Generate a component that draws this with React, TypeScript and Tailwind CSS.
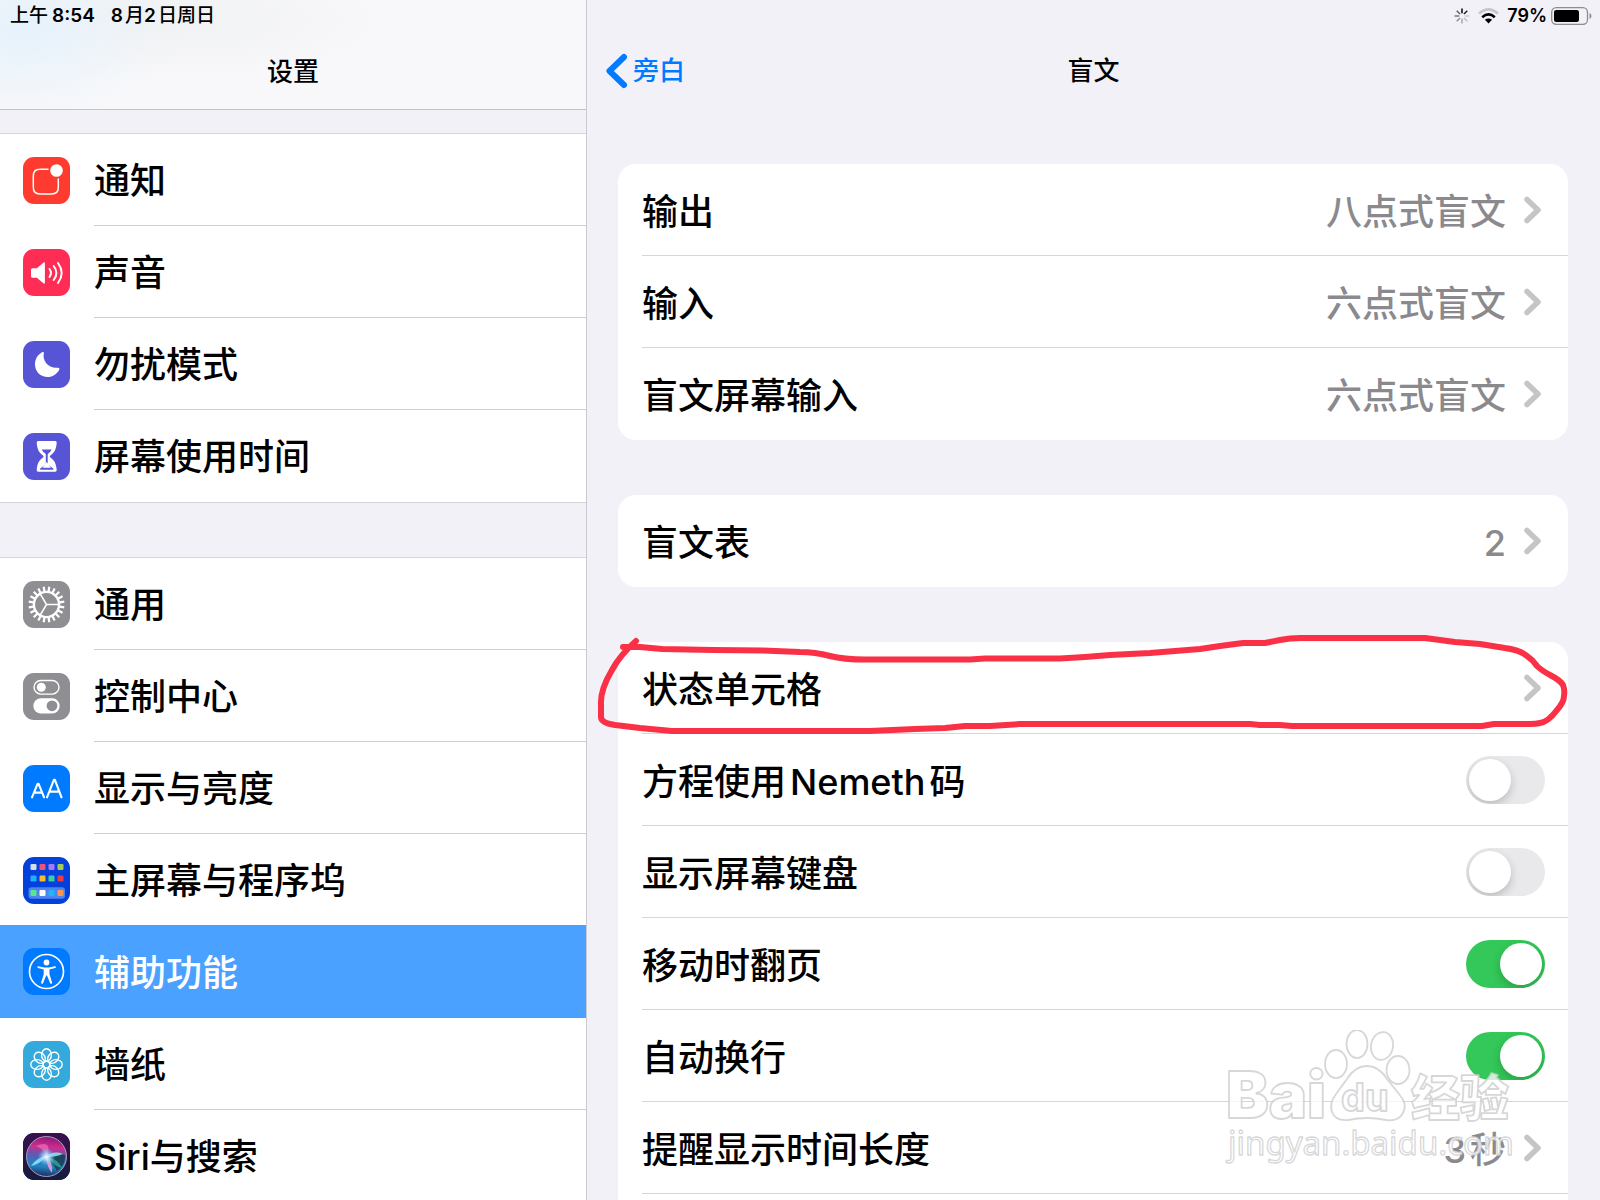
import { useState, type ReactNode } from 'react';

type NavItem = {
  label: ReactNode;
  tile: string;
  icon: ReactNode;
  active?: boolean;
};

const GEAR_TEETH = Array.from({ length: 20 }, (_, i) => i * 18);
const PETALS = Array.from({ length: 8 }, (_, i) => i * 45);

const HOME_APPS = [
  ['#d9dce6', '#f0527a', '#a878f8', '#a6cc58'],
  ['#22b0f8', '#f8bc2c', '#36d0a4', '#ee3c40'],
  ['#5ce68c', '#ffffff', '#1fb6fa', '#f89850'],
];

const BellIcon = () => (
  <>
    <path
      d="M25 12.200H17q-6.700 0-6.700 6.700v11.400q0 6.700 6.700 6.700h11.600q6.700 0 6.700-6.700V22"
      fill="none"
      stroke="#fff"
      strokeWidth="1.500"
      strokeLinecap="round"
    />
    <circle cx="33.500" cy="13.500" r="6.300" fill="#fff" />
  </>
);

const SoundIcon = () => (
  <>
    <path
      d="M9.500 19.200h4.300l6.300-5.300q1.800-1.400 1.800.8v18.600q0 2.200-1.800.8l-6.300-5.300H9.500q-1.500 0-1.500-1.500v-6.600q0-1.500 1.500-1.500z"
      fill="#fff"
    />
    <path
      d="M26.500 20q3 4 0 8M30.700 17q5.400 7 0 14M35 14q7.400 10 0 20"
      fill="none"
      stroke="#fff"
      strokeWidth="2"
      strokeLinecap="round"
    />
  </>
);

const MoonIcon = () => (
  <path
    d="M19.200 11.300c.9-.6 1.900-.2 1.600.9-1.500 7.500 4.200 15.200 13.700 14.500 1.700-.2 2.400.7 1.700 2-2.500 4.600-6.500 7.300-11.500 7.300-7.200 0-12.700-5.700-12.700-12.600 0-5 2.500-9.600 7.200-12.100z"
    fill="#fff"
  />
);

const HourglassIcon = () => (
  <>
    <path
      d="M15.200 8h17q1.600 0 1.500 1.700c-.4 5.900-1.900 9.700-6.300 12.700q-1.300 1 0 2c4.500 3 5.900 6.900 6.300 12.700q.1 1.700-1.500 1.700h-17q-1.600 0-1.500-1.700c.4-5.800 1.800-9.700 6.300-12.700q1.300-1 0-2c-4.400-3-5.900-6.800-6.300-12.700Q13.600 8 15.200 8z"
      fill="#fff"
    />
    <path
      d="M18.700 16.400h10q-1.300 2.600-3.200 3.900-.8.600-.8 1.600v8.600q0 1 .9 1.500l4.700 3.400q.8 1.300-.7 1.300H17.900q-1.500 0-.7-1.300l4.700-3.400q.9-.5.9-1.500v-8.600q0-1-.8-1.600-2.100-1.300-3.300-3.900z"
      fill="#5854d6"
    />
    <path d="M23.700 29l-4.200 5.700h8.500z" fill="#fff" />
  </>
);

const GearIcon = () => (
  <g fill="none" stroke="#fff">
    <circle cx="23.500" cy="23.500" r="12.600" strokeWidth="2.400" />
    <g strokeWidth="2.200">
      {GEAR_TEETH.map((deg) => (
        <path key={deg} d="M23.500 5.500v4.800" transform={`rotate(${deg + 9} 23.500 23.500)`} />
      ))}
    </g>
    <path d="M23.500 23.500h12M23.500 23.500l-6.300-10.700M23.500 23.500l-6.300 10.700" strokeWidth="1.600" />
  </g>
);

const SwitchesIcon = () => (
  <>
    <rect x="11" y="7.500" width="25" height="13.600" rx="6.800" fill="none" stroke="#fff" strokeWidth="1.400" />
    <circle cx="18.300" cy="14.300" r="4.500" fill="#fff" />
    <rect x="10.300" y="25.200" width="26.400" height="15.200" rx="7.600" fill="#fff" />
    <circle cx="29" cy="32.800" r="5.400" fill="#8e8e93" />
  </>
);

const TextSizeIcon = () => (
  <g fill="none" stroke="#fff" strokeLinecap="round" strokeLinejoin="round">
    <path d="M9 32.300l5.700-13.600h.8l5.600 13.600M11 27.600h8.200" strokeWidth="2.100" />
    <path d="M24 32.300l7-17.600h.8l6.700 17.600M26.500 26.600h9.600" strokeWidth="2.100" />
  </g>
);

const HomeScreenIcon = () => (
  <>
    <rect x="5.500" y="30.300" width="36.500" height="11.400" rx="3" fill="#4f83ee" />
    {HOME_APPS.map((row, r) =>
      row.map((color, c) => (
        <rect key={color} x={7.5 + c * 9} y={[7, 18.5, 33][r]} width="6" height="6" rx="1.200" fill={color} />
      ))
    )}
  </>
);

const AccessibilityIcon = () => (
  <>
    <circle cx="23.500" cy="23.500" r="17" fill="none" stroke="#fff" strokeWidth="1.700" />
    <circle cx="23.500" cy="14.500" r="2.900" fill="#fff" />
    <path
      d="M15.300 18.200l6 1.300h4.600l6-1.300q1 0 1.100.8 0 .7-.8.900l-5.700 1.500v4.900l2.600 8.300q.1.900-.7 1.200-.8.200-1.200-.6l-3.200-7.700h-.8l-3.200 7.700q-.4.800-1.200.6-.8-.3-.7-1.200l2.600-8.300v-4.900L15 19.900q-.8-.2-.8-.9.100-.8 1.100-.8z"
      fill="#fff"
    />
  </>
);

const FlowerIcon = () => (
  <g fill="none" stroke="#fff" strokeWidth="1.400">
    {PETALS.map((deg) => (
      <ellipse key={deg} cx="23.500" cy="14" rx="4.900" ry="6.200" transform={`rotate(${deg} 23.500 23.500)`} />
    ))}
    <circle cx="23.500" cy="23.500" r="3.300" />
  </g>
);

const SiriIcon = () => (
  <>
    <defs>
      <linearGradient id="siri-tile" x1="0" y1="0" x2="0" y2="1">
        <stop offset="0" stopColor="#3a1050" />
        <stop offset="1" stopColor="#151c3e" />
      </linearGradient>
      <linearGradient id="siri-orb" x1="0.500" y1="0" x2="0.400" y2="1">
        <stop offset="0" stopColor="#8a1a7c" />
        <stop offset="0.250" stopColor="#d02a8c" />
        <stop offset="0.480" stopColor="#5a5cb4" />
        <stop offset="0.750" stopColor="#2384bc" />
        <stop offset="1" stopColor="#1d2a60" />
      </linearGradient>
      <radialGradient id="siri-glow">
        <stop offset="0" stopColor="#fff" />
        <stop offset="0.350" stopColor="#bfe9ff" stopOpacity="0.800" />
        <stop offset="1" stopColor="#5ac8fa" stopOpacity="0" />
      </radialGradient>
    </defs>
    <rect width="47" height="47" rx="11" fill="url(#siri-tile)" />
    <circle cx="23.500" cy="23.500" r="20" fill="url(#siri-orb)" />
    <path d="M25 24q10-6 17-2 1 10-8 16-5-9-9-14z" fill="#123f52" opacity="0.850" />
    <path d="M24 24Q30 6 13 13q8 3 11 11z" fill="#f58cc4" opacity="0.500" />
    <path d="M24 24Q30 17 40 21q-7 3-16 3z" fill="#9ff5e4" opacity="0.800" />
    <path d="M24 23Q14 24 8 33q9-2 16-10z" fill="#7fe6ff" opacity="0.900" />
    <path d="M23 24q7 4 6 16-5-6-6-16z" fill="#f59ad8" opacity="0.900" />
    <path d="M24 24q11 2 15 11-9-2-15-11z" fill="#35c9a5" opacity="0.600" />
    <circle cx="23.500" cy="24" r="9" fill="url(#siri-glow)" />
    <circle cx="23.500" cy="23.500" r="20" fill="none" stroke="#a7a1b8" strokeWidth="1" />
  </>
);

const NAV_GROUPS: NavItem[][] = [
  [
    { label: '通知', tile: 'bg-[#ff3b30]', icon: <BellIcon /> },
    { label: '声音', tile: 'bg-[#ff2d55]', icon: <SoundIcon /> },
    { label: '勿扰模式', tile: 'bg-[#5854d6]', icon: <MoonIcon /> },
    { label: '屏幕使用时间', tile: 'bg-[#5854d6]', icon: <HourglassIcon /> },
  ],
  [
    { label: '通用', tile: 'bg-[#8e8e93]', icon: <GearIcon /> },
    { label: '控制中心', tile: 'bg-[#8e8e93]', icon: <SwitchesIcon /> },
    { label: '显示与亮度', tile: 'bg-[#007aff]', icon: <TextSizeIcon /> },
    { label: '主屏幕与程序坞', tile: 'bg-[#0340dc]', icon: <HomeScreenIcon /> },
    { label: '辅助功能', tile: 'bg-[#007aff]', icon: <AccessibilityIcon />, active: true },
    { label: '墙纸', tile: 'bg-[#34aadc]', icon: <FlowerIcon /> },
    { label: 'Siri与搜索', tile: 'bg-[#151c3e]', icon: <SiriIcon /> },
  ],
];

function NavRow({ item }: { item: NavItem }) {
  return (
    <li className="group/nav">
      <a
        href="#"
        aria-current={item.active ? 'page' : undefined}
        className={`flex items-center gap-6 pl-[23px] ${
          item.active ? 'relative -mt-px h-[93px] bg-[#4ba1ff] text-white' : 'h-[92px] bg-white text-black'
        }`}
      >
        <svg viewBox="0 0 47 47" className={`size-[47px] shrink-0 rounded-[11px] ${item.tile}`} aria-hidden="true">
          {item.icon}
        </svg>
        <span
          className={`flex h-full flex-1 items-center border-b pt-[3px] group-last/nav:border-transparent ${
            item.active ? 'border-transparent' : 'border-[#cfcfd2]'
          }`}
        >
          {item.label}
        </span>
      </a>
    </li>
  );
}

function Sidebar() {
  return (
    <aside className="flex w-[587px] shrink-0 flex-col border-r border-[#cbcad0]">
      <header className="h-[110px] shrink-0 border-b border-[#c2c2c7] bg-[#f8f8fa] bg-[radial-gradient(ellipse_150px_90px_at_20px_30px,#e6f2fc,transparent),radial-gradient(ellipse_240px_60px_at_150px_20px,#f0f1f2,transparent)]">
        <div className="flex h-8 items-center gap-4 pl-[10px] text-[19px] leading-8">
          <span>上午<b className="ml-1 font-semibold">8:54</b></span>
          <span>
            <b className="mr-0.5 font-semibold">8</b>月<b className="mr-0.5 font-semibold">2</b>日周日
          </span>
        </div>
        <h1 className="pt-[22px] text-center text-[26px] leading-9 font-medium">设置</h1>
      </header>
      <nav className="flex flex-1 flex-col gap-14 overflow-y-auto pt-6 [scrollbar-width:none]">
        {NAV_GROUPS.map((group, i) => (
          <ul key={i} className="shadow-[0_0_0_1px_#d6d6da]">
            {group.map((item, j) => (
              <NavRow key={j} item={item} />
            ))}
          </ul>
        ))}
      </nav>
    </aside>
  );
}

function StatusIcons() {
  return (
    <div className="flex h-8 items-center justify-end pr-2 text-lg leading-8 font-semibold">
      <svg viewBox="0 0 16 16" className="mr-2 size-4" aria-hidden="true" stroke="#000" strokeWidth="1.500">
        {[1, 0.85, 0.15, 0.2, 0.3, 0.4, 0.5, 0.6].map((opacity, i) => (
          <path key={i} d="M8 .5v4.800" opacity={opacity} transform={`rotate(${i * 45} 8 8)`} />
        ))}
      </svg>
      <svg viewBox="0 0 21 16" className="mr-2 h-4 w-[21px]" aria-hidden="true" fill="none" strokeWidth="2.600">
        <path d="M1 5.600q9.500-8.400 19 0" stroke="#c6c6ca" />
        <path d="M4.200 9.200q6.300-5.600 12.600 0" stroke="#000" />
        <path d="M10.500 15.500l-3.600-3.700q3.600-2.800 7.200 0z" fill="#000" />
      </svg>
      <span className="mr-1">79%</span>
      <svg viewBox="0 0 41 18" className="h-[18px] w-[41px]" aria-hidden="true">
        <rect x="0.700" y="0.700" width="35.800" height="16.600" rx="4.500" fill="none" stroke="#8c8c91" strokeWidth="1.300" />
        <rect x="3" y="3" width="25" height="12" rx="2.200" fill="#000" />
        <path d="M38.500 6q2 .8 2 3t-2 3z" fill="#8c8c91" />
      </svg>
    </div>
  );
}

function Chevron() {
  return (
    <svg viewBox="0 0 17 28" className="h-7 w-[17px] shrink-0" aria-hidden="true">
      <path
        d="M3 3.500L14 14 3 24.500"
        fill="none"
        stroke="#c5c5c7"
        strokeWidth="5.500"
        strokeLinecap="round"
        strokeLinejoin="round"
      />
    </svg>
  );
}

function Card({ children }: { children: ReactNode }) {
  return <section className="relative rounded-[18px] bg-white pl-6">{children}</section>;
}

function LinkRow({ label, value }: { label: string; value?: ReactNode }) {
  return (
    <button
      type="button"
      className="flex h-[92px] w-full items-center border-b border-[#d6d6d9] pr-[27px] text-left last:border-transparent"
    >
      <span className="flex-1 pt-1">{label}</span>
      <span className="mr-[18px] pt-1 text-[#8a8a8e]">{value}</span>
      <Chevron />
    </button>
  );
}

function ToggleRow({ label, defaultOn = false }: { label: ReactNode; defaultOn?: boolean }) {
  const [on, setOn] = useState(defaultOn);

  return (
    <label className="flex h-[92px] items-center border-b border-[#d6d6d9] pr-[23px]">
      <span className="flex-1 pt-1">{label}</span>
      <input
        type="checkbox"
        role="switch"
        checked={on}
        onChange={() => setOn(!on)}
        className="h-12 w-[79px] appearance-none overflow-hidden rounded-full bg-[#e9e9eb] p-[3px] before:block before:size-[42px] before:rounded-full before:bg-white before:shadow-[0_4px_10px_rgba(0,0,0,0.2)] checked:bg-[#34c759] checked:before:translate-x-[31px]"
      />
    </label>
  );
}

// hand-drawn loop around the first row
function Scribble() {
  return (
    <svg
      viewBox="586 630 982 110"
      preserveAspectRatio="none"
      className="pointer-events-none absolute -top-3 -left-8 h-[110px] w-[calc(100%+32px)]"
      aria-hidden="true"
    >
      <path
        d="M623 647H640L662 649L713 650L763 650.500L800 652Q815 652 830 656T872 659.500H970L985 658.500H1060L1085 657L1110 655L1150 653L1200 649L1220 646L1243 643H1265L1280 640Q1290 638 1300 638H1425L1455 642L1480 644L1505 648Q1520 650 1527 656Q1533 660 1537 666Q1541 670 1550 675Q1560 680 1563 685Q1565 690 1564 696Q1564 702 1557 710Q1548 722 1540 723Q1536 724 1530 724H1494L1482 726H1292L1280 725H1260L1250 724H1020L990 726H965L945 728L915 729L870 731H672L640 728L615 725Q601 723 601 717V705Q600 690 612 670Q620 655 636 641"
        fill="none"
        stroke="#fa3146"
        strokeWidth="6"
        strokeLinecap="round"
        strokeLinejoin="round"
      />
    </svg>
  );
}

function Watermark() {
  return (
    <svg
      viewBox="0 0 300 170"
      className="pointer-events-none absolute right-20 bottom-0 h-[170px] w-[300px]"
      aria-hidden="true"
      fill="#fff"
      fillOpacity="0.750"
      stroke="#cdcdd0"
      strokeOpacity="0.800"
      strokeWidth="1.800"
      strokeLinejoin="round"
    >
      <text x="6" y="88" fontFamily="Inter" fontWeight="900" fontSize="64">Bai</text>
      <ellipse cx="116" cy="34" rx="11" ry="14" />
      <ellipse cx="137" cy="14" rx="10.500" ry="14" />
      <ellipse cx="162" cy="16" rx="11" ry="14" transform="rotate(10 162 16)" />
      <ellipse cx="178" cy="40" rx="11.500" ry="14" />
      <path d="M127 49q8-13 20-13t20 13l12 15q9 10 4 19-5 9-17 7-19-4-38 0-13 1-16-8-3-9 4-18z" />
      <text x="121" y="81" fontFamily="Inter" fontWeight="700" fontSize="38">du</text>
      <text x="191" y="86" fontFamily="Noto Sans CJK SC" fontWeight="900" fontSize="49">经验</text>
      <text x="8" y="125" fontFamily="Noto Sans" fontWeight="400" fontSize="33" strokeWidth="1.300">jingyan.baidu.com</text>
    </svg>
  );
}

function Detail() {
  return (
    <main className="flex min-w-0 flex-1 flex-col">
      <StatusIcons />
      <header className="grid h-[78px] shrink-0 grid-cols-[1fr_auto_1fr] items-center px-[18px] text-[26px] leading-9">
        <button type="button" className="flex items-center gap-1 justify-self-start text-[#007aff]">
          <svg viewBox="0 0 24 36" className="h-9 w-6" aria-hidden="true">
            <path
              d="M19 4L4.500 18 19 32"
              fill="none"
              stroke="#007aff"
              strokeWidth="6"
              strokeLinecap="round"
              strokeLinejoin="round"
            />
          </svg>
          <span className="font-medium">旁白</span>
        </button>
        <h2 className="font-medium">盲文</h2>
      </header>
      <div className="flex flex-1 flex-col gap-[55px] overflow-y-auto pt-[54px] pr-8 pl-[31px] [scrollbar-width:none]">
        <Card>
          <LinkRow label="输出" value="八点式盲文" />
          <LinkRow label="输入" value="六点式盲文" />
          <LinkRow label="盲文屏幕输入" value="六点式盲文" />
        </Card>
        <Card>
          <LinkRow label="盲文表" value="2" />
        </Card>
        <Card>
          <LinkRow label="状态单元格" />
          <ToggleRow label={<>方程使用<span className="mx-1">Nemeth</span>码</>} />
          <ToggleRow label="显示屏幕键盘" />
          <ToggleRow label="移动时翻页" defaultOn />
          <ToggleRow label="自动换行" defaultOn />
          <LinkRow label="提醒显示时间长度" value={<>3<span className="ml-1">秒</span></>} />
          <div className="h-[92px]" />
          <Scribble />
        </Card>
      </div>
    </main>
  );
}

export default function App() {
  return (
    <div
      lang="zh-CN"
      className="relative flex h-screen overflow-hidden bg-[#f2f1f8] font-['Inter','Noto_Sans_CJK_SC',sans-serif] text-4xl font-medium text-black"
    >
      <Sidebar />
      <Detail />
      <Watermark />
    </div>
  );
}
